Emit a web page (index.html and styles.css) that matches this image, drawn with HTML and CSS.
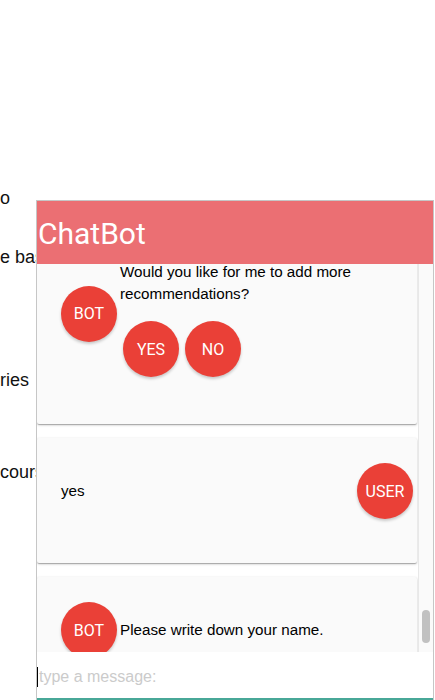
FILE: index.html
```html
<!DOCTYPE html>
<html lang="en">
<head>
<meta charset="utf-8">
<title>ChatBot</title>
<link rel="stylesheet" href="styles.css">
</head>
<body>
<main class="page">
  <p class="line l1">o</p>
  <p class="line l2">e basket</p>
  <p class="line l3">ries</p>
  <p class="line l4">courses</p>
</main>

<section class="chat">
  <header class="chat-header">ChatBot</header>
  <div class="chat-body">
    <div class="messages" id="messages">
      <article class="card card-bot-question">
        <div class="avatar avatar-bot">BOT</div>
        <div class="question">
          <p class="msg-text">Would you like for me to add more recommendations?</p>
          <div class="choices">
            <button class="avatar choice">YES</button>
            <button class="avatar choice">NO</button>
          </div>
        </div>
      </article>
      <article class="card card-user" id="second">
        <p class="msg-text">yes</p>
        <div class="avatar">USER</div>
      </article>
      <article class="card card-bot">
        <div class="avatar">BOT</div>
        <p class="msg-text">Please write down your name.</p>
      </article>
    </div>
    <div class="scrollbar"><div class="thumb"></div></div>
  </div>
  <div class="composer">
    <span class="caret"></span>
    <input class="message-input" type="text" placeholder="type a message:">
  </div>
</section>
<script>
  var list = document.getElementById('messages');
  var second = document.getElementById('second');
  list.scrollTop = second.offsetTop - 174;
</script>
</body>
</html>
```

FILE: styles.css
```css
* { box-sizing: border-box; }

html, body {
  margin: 0;
  padding: 0;
  background: #ffffff;
  width: 435px;
  height: 700px;
  overflow: hidden;
}

.page {
  padding-top: 186px;
  font-family: "Liberation Sans", Arial, sans-serif;
  font-size: 18px;
  color: #111111;
}

.line {
  margin: 0;
  line-height: 24px;
  white-space: nowrap;
}
.l2 { margin-top: 35px; }
.l3 { margin-top: 99px; }
.l4 { margin-top: 68px; }

.chat {
  position: fixed;
  left: 36px;
  top: 200px;
  width: 398px;
  height: 500px;
  border: 1px solid #c6c6c6;
  border-bottom: none;
  background: #ffffff;
  display: flex;
  flex-direction: column;
}

.chat-header {
  height: 63px;
  flex: 0 0 auto;
  background: #eb6f73;
  color: #ffffff;
  font-family: Roboto, "Liberation Sans", sans-serif;
  font-size: 30px;
  display: flex;
  align-items: center;
  padding-left: 1px;
  padding-top: 2px;
}

.chat-body {
  flex: 1 1 auto;
  display: flex;
  min-height: 0;
}

.messages {
  position: relative;
  flex: 1 1 auto;
  overflow: hidden;
  display: flex;
  flex-direction: column;
  gap: 14px;
  padding-bottom: 120px;
}

.scrollbar {
  flex: 0 0 15px;
  background: #fafafa;
  border-left: 1px solid #e8e8e8;
  padding: 346px 3px 0 3px;
}

.thumb {
  width: 8px;
  height: 33px;
  border-radius: 4px;
  background: #c1c1c1;
}

.card {
  flex: 0 0 auto;
  background: #fafafa;
  border-radius: 2px;
  box-shadow: 0 1px 3px rgba(0,0,0,0.2), 0 1px 1px rgba(0,0,0,0.14), 0 2px 1px -1px rgba(0,0,0,0.12);
  display: flex;
  align-items: center;
  margin-right: 1px;
  font-family: "Liberation Sans", Arial, sans-serif;
  font-size: 15.2px;
  color: #000000;
}

.msg-text {
  margin: 0;
  line-height: 22px;
}

.avatar {
  flex: 0 0 auto;
  width: 56px;
  height: 56px;
  border-radius: 50%;
  background: #ea4037;
  color: #ffffff;
  border: none;
  padding: 0;
  display: flex;
  align-items: center;
  justify-content: center;
  font-family: Roboto, "Liberation Sans", sans-serif;
  font-size: 16px;
  box-shadow: 0 2px 3px rgba(0,0,0,0.2);
}

.card-bot-question {
  padding: 24px 4px 44px 24px;
  align-items: center;
}
.card-bot-question .avatar-bot { margin-bottom: 14px; }
.question {
  margin-left: 3px;
  display: flex;
  flex-direction: column;
}
.choices {
  display: flex;
  gap: 6px;
  margin: 16px 0 3px 3px;
}

.card-user {
  padding: 25px 4px 44px 24px;
  justify-content: space-between;
}

.card-bot {
  padding: 25px 4px 44px 24px;
  gap: 3px;
}

.composer {
  flex: 0 0 48px;
  display: flex;
  align-items: center;
  border-bottom: 2px solid #48a898;
  background: #ffffff;
  padding-top: 3px;
}

.caret {
  width: 1px;
  height: 20px;
  background: #000000;
  flex: 0 0 auto;
}

.message-input {
  flex: 1 1 auto;
  border: none;
  outline: none;
  background: transparent;
  padding: 0 0 0 1px;
  font-family: "Liberation Sans", Arial, sans-serif;
  font-size: 16px;
  color: #222;
}
.message-input::placeholder { color: #cbcbcb; }
```
